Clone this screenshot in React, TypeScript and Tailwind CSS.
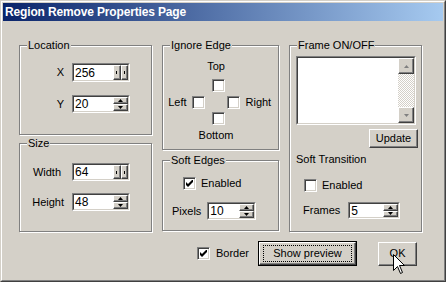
import React from "react";

function Raised({ className = "", children }: { className?: string; children?: React.ReactNode }) {
  return (
    <div
      className={`flex items-center justify-center bg-[#d4d0c8] border border-t-white border-l-white border-r-[#404040] border-b-[#404040] shadow-[inset_-1px_-1px_0_#808080] ${className}`}
    >
      {children}
    </div>
  );
}

function Sunken({ className = "", children }: { className?: string; children?: React.ReactNode }) {
  return (
    <div className={`flex border border-t-[#808080] border-l-[#808080] border-r-white border-b-white ${className}`}>
      <div className="flex flex-1 min-w-0 bg-white border border-t-[#404040] border-l-[#404040] border-r-[#d4d0c8] border-b-[#d4d0c8]">
        {children}
      </div>
    </div>
  );
}

function Tri({ down = false, color = "#000" }: { down?: boolean; color?: string }) {
  return (
    <svg width="5" height="3" viewBox="0 0 5 3">
      <polygon points={down ? "0,0 5,0 2.5,3" : "2.5,0 5,3 0,3"} fill={color} />
    </svg>
  );
}

function Spin({ value, className, squished = false }: { value: string; className: string; squished?: boolean }) {
  return (
    <Sunken className={className}>
      <span className="flex-1 pl-px text-[12px] leading-none self-center">{value}</span>
      {squished ? (
        <div className="flex w-[15px]">
          <Raised className="flex-1">
            <span className="w-px h-[3px] bg-black" />
          </Raised>
          <Raised className="flex-1">
            <span className="w-px h-[3px] bg-black" />
          </Raised>
        </div>
      ) : (
        <div className="flex flex-col w-[15px]">
          <Raised className="flex-1">
            <Tri />
          </Raised>
          <Raised className="flex-1">
            <Tri down />
          </Raised>
        </div>
      )}
    </Sunken>
  );
}

function Checkbox({ checked = false }: { checked?: boolean }) {
  return (
    <div className="flex items-center justify-center w-[13px] h-[13px] shrink-0 bg-white border border-t-[#808080] border-l-[#808080] border-r-white border-b-white shadow-[inset_1px_1px_0_#404040,inset_-1px_-1px_0_#d4d0c8]">
      {checked && (
        <svg width="7" height="7" viewBox="0 0 7 7">
          <polygon points="0,2 2,4 7,-1 7,2 2,7 0,5" fill="#000" />
        </svg>
      )}
    </div>
  );
}

function Group({ label, className, children }: { label: string; className: string; children?: React.ReactNode }) {
  return (
    <div className={`relative border border-[#808080] shadow-[inset_1px_1px_0_#fff,1px_1px_0_#fff] ${className}`}>
      <span className="absolute -top-[7px] left-[7px] bg-[#d4d0c8] px-px">{label}</span>
      {children}
    </div>
  );
}

export default function App() {
  return (
    <div className="relative w-[446px] h-[282px] bg-[#d4d0c8] text-black text-[11px] leading-[13px] font-['Liberation_Sans',Arial,sans-serif] border border-t-[#d4d0c8] border-l-[#d4d0c8] border-r-[#404040] border-b-[#404040]">
      <div className="h-full flex flex-col p-px border border-t-white border-l-white border-r-[#808080] border-b-[#808080]">
        {/* caption */}
        <div className="h-[18px] flex items-center pl-[2px] bg-[linear-gradient(to_right,#0a246a,#a6caf0)]">
          <span className="text-white font-bold text-[12px] leading-[14px] tracking-[-0.15px]">
            Region Remove Properties Page
          </span>
        </div>

        <div className="pl-[16px] pt-[24px]">
          <div className="flex gap-[10px] items-start">
            {/* column 1 */}
            <div className="flex flex-col gap-[8px]">
              <Group label="Location" className="w-[133px] h-[90px]">
                <div className="flex flex-col gap-[13px] pt-[17px]">
                  <div className="flex items-center">
                    <span className="w-[44px] text-right">X</span>
                    <Spin value="256" className="ml-[8px] w-[58px] h-[19px]" squished />
                  </div>
                  <div className="flex items-center">
                    <span className="w-[44px] text-right">Y</span>
                    <Spin value="20" className="ml-[8px] w-[58px] h-[18px]" />
                  </div>
                </div>
              </Group>
              <Group label="Size" className="w-[133px] h-[89px]">
                <div className="flex flex-col gap-[12px] pt-[19px]">
                  <div className="flex items-center">
                    <span className="w-[44px] text-right pr-[3px]">Width</span>
                    <Spin value="64" className="ml-[8px] w-[58px] h-[18px]" squished />
                  </div>
                  <div className="flex items-center">
                    <span className="w-[44px] text-right">Height</span>
                    <Spin value="48" className="ml-[8px] w-[58px] h-[18px]" />
                  </div>
                </div>
              </Group>
            </div>

            {/* column 2 */}
            <div className="flex flex-col gap-[10px]">
              <Group label="Ignore Edge" className="w-[117px] h-[105px]">
                <div className="grid grid-cols-[1fr_13px_1fr] gap-x-[4px] pr-[5px] pt-[14px]">
                  <span className="col-span-3 text-center pr-[4px]">Top</span>
                  <div className="col-start-2 mt-[6px]">
                    <Checkbox />
                  </div>
                  <div className="col-start-1 mt-[4px] flex items-center justify-end gap-[5px] pr-[3px]">
                    <span>Left</span>
                    <Checkbox />
                  </div>
                  <div className="col-start-3 mt-[4px] flex items-center gap-[6px] ml-[-2px]">
                    <Checkbox />
                    <span>Right</span>
                  </div>
                  <div className="col-start-2 mt-[3px]">
                    <Checkbox />
                  </div>
                  <span className="col-span-3 text-center pr-[4px] mt-[4px]">Bottom</span>
                </div>
              </Group>
              <Group label="Soft Edges" className="w-[117px] h-[71px]">
                <div className="flex flex-col pt-[16px]">
                  <div className="flex items-center gap-[5px] pl-[20px]">
                    <Checkbox checked />
                    <span>Enabled</span>
                  </div>
                  <div className="flex items-center mt-[12px] pl-[9px]">
                    <span>Pixels</span>
                    <Spin value="10" className="ml-[6px] w-[49px] h-[18px]" />
                  </div>
                </div>
              </Group>
            </div>

            {/* column 3 */}
            <Group label="Frame ON/OFF" className="w-[133px] h-[187px]">
              <div className="flex flex-col items-start pt-[10px]">
                <Sunken className="ml-[6px] w-[120px] h-[69px]">
                  <div className="flex-1" />
                  <div className="flex flex-col w-[16px]">
                    <Raised className="h-[16px]">
                      <Tri color="#808080" />
                    </Raised>
                    <div className="flex-1 bg-[repeating-conic-gradient(#ffffff_0_25%,#d4d0c8_0_50%)] bg-[length:2px_2px]" />
                    <Raised className="h-[16px]">
                      <Tri down color="#808080" />
                    </Raised>
                  </div>
                </Sunken>
                <Raised className="ml-[79px] mt-[4px] w-[49px] h-[19px]">Update</Raised>
                <span className="ml-[6px] mt-[5px]">Soft Transition</span>
                <div className="flex items-center gap-[5px] ml-[14px] mt-[13px]">
                  <Checkbox />
                  <span>Enabled</span>
                </div>
                <div className="flex items-center ml-[13px] mt-[10px]">
                  <span>Frames</span>
                  <Spin value="5" className="ml-[8px] w-[52px] h-[17px]" />
                </div>
              </div>
            </Group>
          </div>

          {/* bottom buttons */}
          <div className="flex items-center mt-[9px] ml-[178px]">
            <Checkbox checked />
            <span className="ml-[6px]">Border</span>
            <div className="ml-[9px] w-[99px] h-[25px] flex border border-black">
              <Raised className="flex-1">
                <span className="flex items-center justify-center w-[87px] h-[15px] outline-1 outline-dotted outline-black">
                  Show preview
                </span>
              </Raised>
            </div>
            <Raised className="ml-[21px] w-[39px] h-[24px]">OK</Raised>
          </div>
        </div>
      </div>

      {/* mouse pointer */}
      <svg className="absolute left-[392px] top-[253px]" width="13" height="21" viewBox="0 0 13 21">
        <polygon points="0.5,0.5 0.5,16.5 4.5,12.5 7.5,19.5 9.5,18.5 6.5,11.5 11.5,11.5" fill="#fff" stroke="#000" strokeWidth="1" />
      </svg>
    </div>
  );
}
